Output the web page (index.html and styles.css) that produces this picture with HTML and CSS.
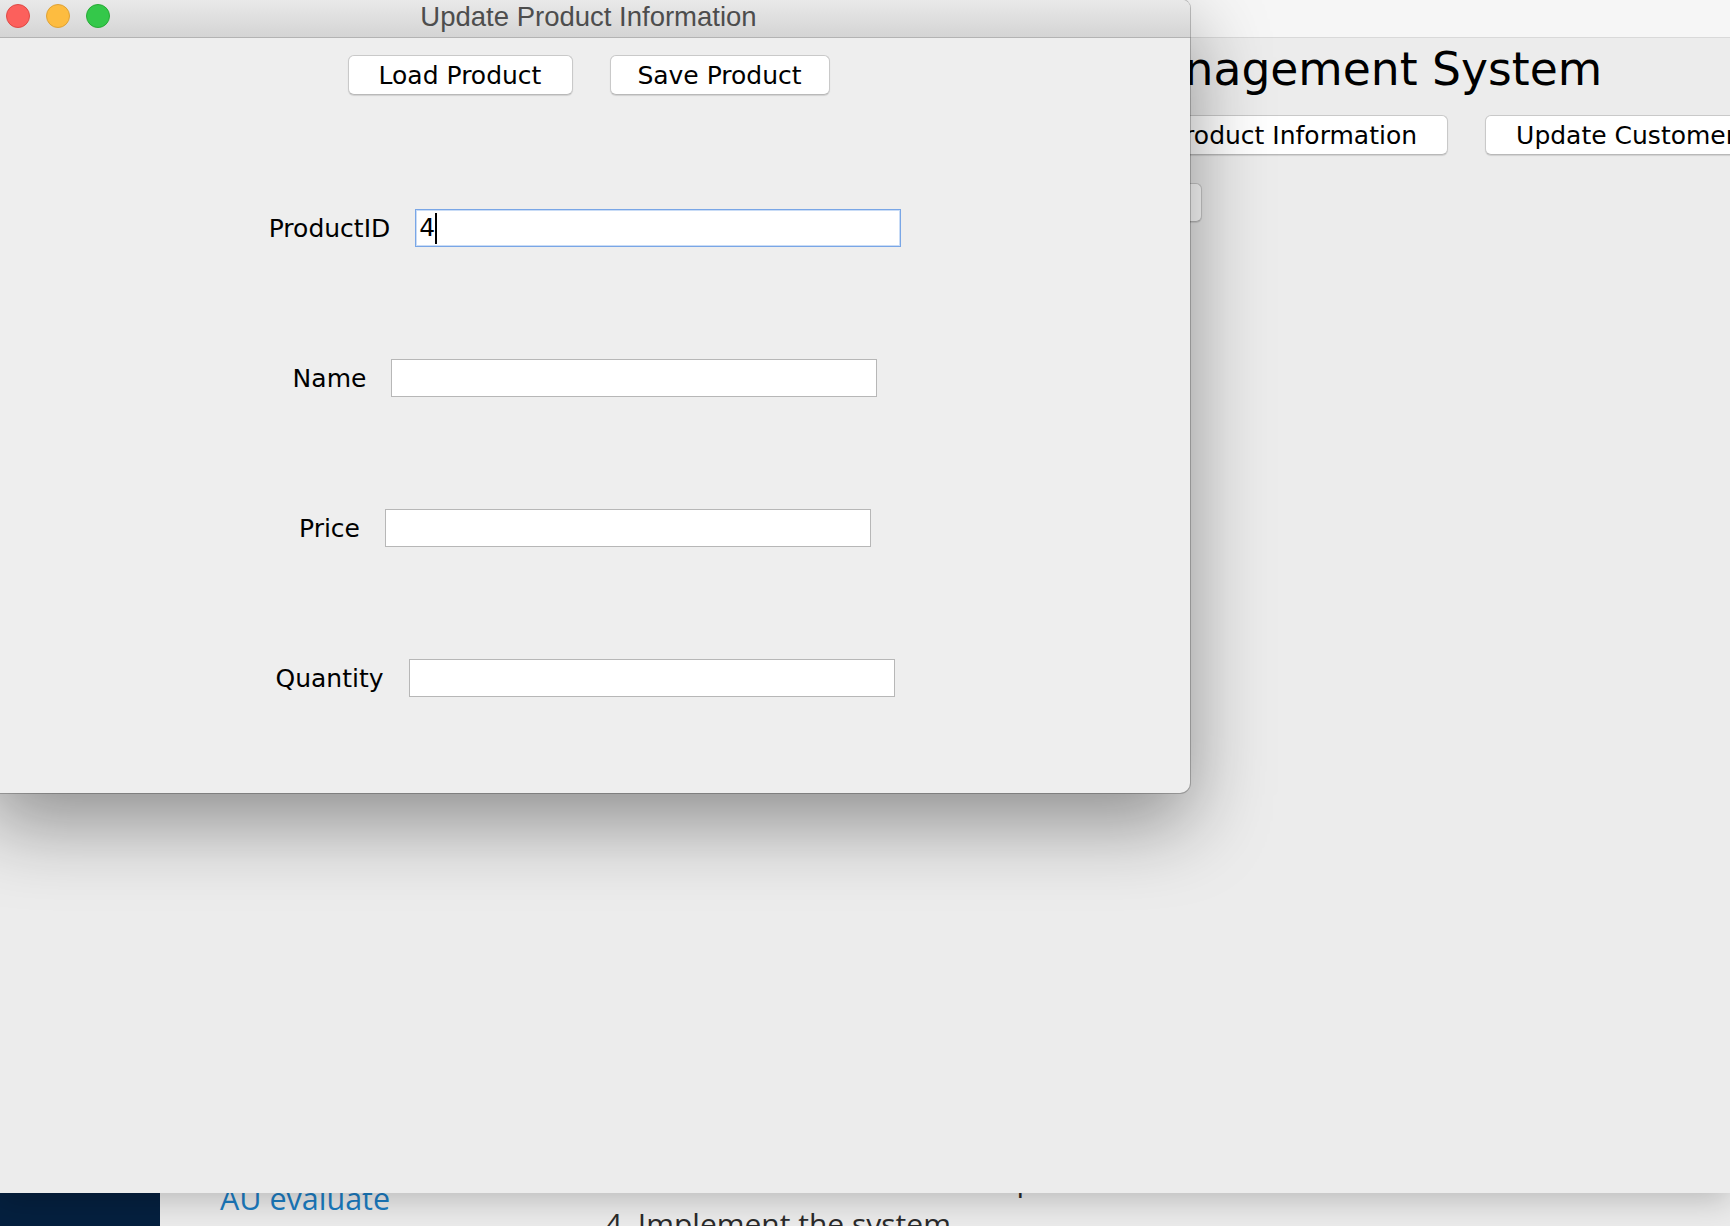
FILE: index.html
```html
<!DOCTYPE html>
<html>
<head>
<meta charset="utf-8">
<title>Update Product Information</title>
<link rel="stylesheet" href="styles.css">
</head>
<body>
<div class="desktop">
  <div class="main-window">
    <div class="main-titlebar"></div>
    <h1 class="main-heading">Inventory Management System</h1>
    <div class="main-buttons">
      <button class="btn main-btn">Update Product Information</button>
      <button class="btn main-btn">Update Customer Information</button>
    </div>
    <div class="main-buttons-2">
      <button class="btn hidden-btn">View Orders</button>
    </div>
  </div>

  <div class="lower-window">
    <div class="sidebar"></div>
    <div class="lower-left">
      <div class="au-text">AU evaluate</div>
    </div>
    <div class="lower-main">
      <div class="lower-line">3. Create a model and then a plan to test the solution for the client</div>
      <div class="lower-line step">4. Implement the system</div>
    </div>
  </div>

  <div class="dialog">
    <div class="dialog-titlebar">
      <div class="lights">
        <span class="light red"></span>
        <span class="light yellow"></span>
        <span class="light green"></span>
      </div>
      <div class="dialog-title">Update Product Information</div>
      <div></div>
    </div>
    <div class="dialog-body">
      <div class="dialog-buttons">
        <button class="btn load-btn">Load Product</button>
        <button class="btn save-btn">Save Product</button>
      </div>
      <div class="form">
        <div class="form-row">
          <span class="label">ProductID</span>
          <div class="field focused"><span class="value">4</span><span class="caret"></span></div>
        </div>
        <div class="form-row">
          <span class="label">Name</span>
          <div class="field"></div>
        </div>
        <div class="form-row">
          <span class="label">Price</span>
          <div class="field"></div>
        </div>
        <div class="form-row">
          <span class="label">Quantity</span>
          <div class="field"></div>
        </div>
      </div>
    </div>
  </div>
</div>
</body>
</html>
```
FILE: styles.css
```css
html, body {
  margin: 0;
  padding: 0;
}

body {
  width: 1730px;
  height: 1226px;
  overflow: hidden;
  background: #ececec;
  font-family: "DejaVu Sans", "Liberation Sans", sans-serif;
  color: #000;
}

.desktop {
  position: relative;
  width: 1730px;
  height: 1226px;
  display: flex;
  flex-direction: column;
  overflow: hidden;
}

/* ---------- background application window ---------- */
.main-window {
  position: relative;
  z-index: 1;
  flex: none;
  height: 1193px;
  background: #ececec;
  box-shadow: 0 6px 30px rgba(0, 0, 0, 0.22);
  display: flex;
  flex-direction: column;
}

.main-titlebar {
  flex: none;
  height: 37px;
  background: #f6f6f6;
  border-bottom: 1px solid #d9d9d9;
}

.main-heading {
  margin: 9px 0 0 885px;
  font-size: 45.6px;
  line-height: 45px;
  font-weight: normal;
  white-space: nowrap;
}

.main-buttons {
  display: flex;
  gap: 37px;
  margin-top: 23px;
  padding-left: 1040px;
  white-space: nowrap;
}

.main-buttons-2 {
  display: flex;
  margin-top: 28px;
  padding-left: 942px;
}

.btn {
  font-family: "DejaVu Sans", "Liberation Sans", sans-serif;
  font-size: 25px;
  color: #000;
  height: 40px;
  padding: 0 30px;
  background: #fff;
  border: 1px solid #c9c9c9;
  border-bottom-color: #b9b9b9;
  border-radius: 6px;
  box-shadow: 0 1px 1px rgba(0, 0, 0, 0.12);
  white-space: nowrap;
  flex: none;
}

.hidden-btn {
  width: 260px;
  height: 39px;
}

/* ---------- lower window (web page behind) ---------- */
.lower-window {
  flex: 1;
  display: flex;
  overflow: hidden;
  background: #ebebeb;
}

.sidebar {
  flex: none;
  width: 160px;
  background: #05203f;
}

.lower-left {
  flex: none;
  width: 385px;
  padding-left: 60px;
}

.au-text {
  margin-top: -12px;
  font-family: "Open Sans", sans-serif;
  font-size: 30.5px;
  line-height: 34px;
  color: #1b7cc1;
  white-space: nowrap;
}

.lower-main {
  flex: 1;
  margin-top: -30px;
}

.lower-line {
  font-family: "Open Sans", sans-serif;
  font-size: 30px;
  line-height: 34px;
  color: #2a2a2a;
  white-space: nowrap;
}

.lower-line.step {
  margin-top: 10px;
}

/* ---------- dialog window ---------- */
.dialog {
  position: absolute;
  z-index: 2;
  left: -13px;
  top: 0;
  width: 1203px;
  height: 793px;
  background: #eeeeee;
  border-radius: 8px 8px 10px 10px;
  box-shadow: 0 30px 80px rgba(0, 0, 0, 0.4), 0 0 0 1px rgba(0, 0, 0, 0.22);
  overflow: hidden;
  display: flex;
  flex-direction: column;
}

.dialog-titlebar {
  flex: none;
  height: 37px;
  border-bottom: 1px solid #b3b3b3;
  background: linear-gradient(#e9e9e9, #d4d4d4);
  display: grid;
  grid-template-columns: 1fr auto 1fr;
}

.lights {
  display: flex;
  gap: 16px;
  padding-left: 19px;
  padding-top: 4px;
  align-items: flex-start;
}

.light {
  width: 24px;
  height: 24px;
  border-radius: 50%;
  box-sizing: border-box;
}

.light.red {
  background: #fc605c;
  border: 1px solid #de4a45;
}

.light.yellow {
  background: #fdbc40;
  border: 1px solid #dea236;
}

.light.green {
  background: #34c84a;
  border: 1px solid #27aa35;
}

.dialog-title {
  font-family: "Liberation Sans", "DejaVu Sans", sans-serif;
  font-size: 27.5px;
  line-height: 34px;
  color: #4d4d4d;
  white-space: nowrap;
}

.dialog-body {
  flex: 1;
  padding-top: 17px;
}

.dialog-buttons {
  display: flex;
  justify-content: center;
  gap: 37px;
}

.load-btn {
  width: 225px;
  padding: 0;
}

.save-btn {
  width: 220px;
  padding: 0;
}

.form {
  margin-top: 114px;
  display: flex;
  flex-direction: column;
  gap: 112px;
  padding-right: 7px;
}

.form-row {
  display: flex;
  justify-content: center;
  align-items: center;
  gap: 25px;
}

.label {
  font-size: 25px;
  white-space: nowrap;
}

.field {
  width: 486px;
  height: 38px;
  box-sizing: border-box;
  background: #fff;
  border: 1px solid #b7b7b7;
  display: flex;
  align-items: center;
  padding-left: 3px;
}

.field.focused {
  border-color: #79a6e6;
  box-shadow: inset 0 0 0 1px #c9dcf6;
}

.value {
  font-size: 25px;
  line-height: 30px;
}

.caret {
  width: 2px;
  height: 31px;
  background: #000;
}
```
